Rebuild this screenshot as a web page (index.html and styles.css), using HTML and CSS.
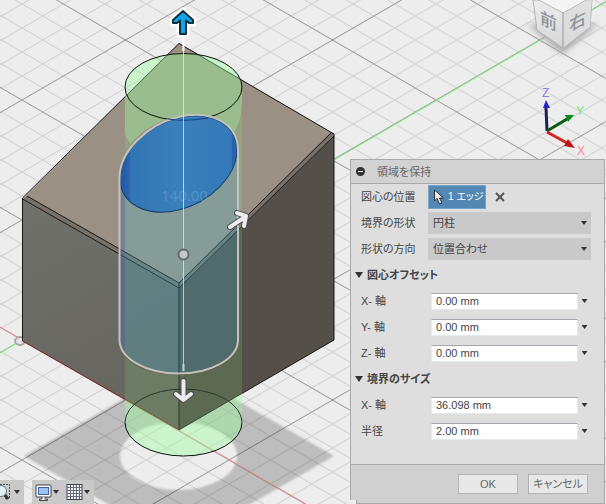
FILE: index.html
```html
<!DOCTYPE html>
<html lang="ja">
<head>
<meta charset="utf-8">
<title>領域を保持</title>
<link rel="stylesheet" href="styles.css">
</head>
<body>
<div class="viewport">

  <svg class="scene" aria-hidden="true">
    <defs>
      <pattern id="minor" x="22" y="340" width="41.4" height="24" patternUnits="userSpaceOnUse">
        <path d="M0 0L41.4 24M0 24L41.4 0" stroke="#000" stroke-opacity=".13" fill="none"/>
      </pattern>
      <pattern id="major" x="22" y="340" width="207" height="120" patternUnits="userSpaceOnUse">
        <path d="M0 0L207 120M0 120L207 0" stroke="#000" stroke-opacity=".26" fill="none"/>
      </pattern>
      <linearGradient id="bore">
        <stop offset="0" stop-color="#2457a6"/>
        <stop offset=".08" stop-color="#2a63ae"/>
        <stop offset=".09" stop-color="#3275b5"/>
        <stop offset=".5" stop-color="#3a80bb"/>
        <stop offset=".95" stop-color="#3579b8"/>
        <stop offset=".96" stop-color="#2b62ad"/>
      </linearGradient>
      <linearGradient id="left-face" x2=".4" y2="1">
        <stop offset="0" stop-color="#71716c"/>
        <stop offset="1" stop-color="#666560"/>
      </linearGradient>
      <filter id="soft"><feGaussianBlur stdDeviation="1"/></filter>
      <clipPath id="body-clip">
        <path d="M22.5 199L179 43L334 134V340L179 430L22.5 341Z"/>
      </clipPath>
      <clipPath id="below-clip">
        <path d="M22.5 341L179 430L334 340V504H22.5Z"/>
      </clipPath>
    </defs>

    <rect width="100%" height="100%" fill="#ededed"/>
    <!-- ground shadow with the hole left in it -->
    <path filter="url(#soft)" fill="#bdbdbd" fill-rule="evenodd" d="M24 456L179 367L334 456L179 545ZM120 456a58.5 34 0 0 0 117 0a58.5 34 0 0 0-117 0Z"/>
    <rect width="100%" height="100%" fill="url(#minor)"/>
    <rect width="100%" height="100%" fill="url(#major)"/>
    <path d="M0 327L306 504" stroke="#f28a8a"/>
    <path d="M0 353L22 340M334 160L606 2" stroke="#7cf07c"/>
    <ellipse cx="20" cy="341" rx="5" ry="4" fill="#e4e4e4" stroke="#a5a5a5" stroke-width="2"/>

    <!-- box -->
    <path d="M22.5 199L179 43L334 134L179 283Z" fill="#9a9184"/>
    <path d="M22.5 199L179 288V430L22.5 341Z" fill="url(#left-face)"/>
    <path d="M179 288L334 136V340L179 430Z" fill="#544f49"/>
    <path d="M22.5 199L27 196L179 283L332 132L334 136L179 288Z" fill="#777167"/>
    <g fill="none" stroke="#151515">
      <path d="M22.5 341V198L179 43.5L334 134V340L179 430"/>
      <path d="M22.5 199L179 288L334 136M27 196L179 283L332 132M179 283V430"/>
    </g>
    <path d="M22.5 341L179 430" stroke="#7c1c18"/>

    <!-- bounding cylinder -->
    <path d="M125 87a58.5 33.5 0 0 1 117 0V104Q241 122 234 132Q210 108 178 117Q148 122 131 144Q125 138 125 132Z" fill="#9aff9a" fill-opacity=".4"/>
    <path d="M125 132Q125 138 131 144L125 156ZM234 132Q241 122 242 104V422a58.5 33.5 0 0 1-117 0V357Q141 375 179 375Q234 372 238 341V150Z" fill="#82d878" fill-opacity=".2" clip-path="url(#body-clip)"/>
    <path d="M125 380V422a58.5 33.5 0 0 0 117 0V380Z" fill="#9aff9a" fill-opacity=".4" clip-path="url(#below-clip)"/>
    <ellipse cx="183.5" cy="87" rx="58.5" ry="33.5" fill="none" stroke="#0a140a"/>
    <path d="M125 422.5a58.5 33.5 0 0 1 117 0" fill="none" stroke="#2c3a2a"/>
    <path d="M125 422.5a58.5 33.5 0 0 0 117 0" fill="none" stroke="#0a140a"/>

    <!-- retained region -->
    <path d="M119.5 178C119.5 152 146 125 178.5 117C211 109 238 124 238 150V341A59.3 34 0 0 1 119.5 341Z" fill="#46c1d8" fill-opacity=".25"/>
    <path d="M120 180H125V355Q120 348 120 341Z" fill="#5a3f90" fill-opacity=".3"/>
    <ellipse rx="58.5" ry="46" transform="matrix(1 -.24 0 1 178.5 164)" fill="url(#bore)" stroke="#123d70"/>
    <path d="M119.5 178C119.5 152 146 125 178.5 117C211 109 238 124 238 150V341A59.3 34 0 0 1 119.5 341Z" fill="none" stroke="#c4c4ba" stroke-width="2"/>
    <path d="M168 119Q184 122 208 118" fill="none" stroke="#1b3f80"/>
    <text x="161" y="201" class="dimension">140.00</text>

    <!-- manipulators -->
    <path d="M183.5 39V368" stroke="#e2f2ea" stroke-opacity=".75"/>
    <path d="M183.5 39V51" stroke="#fff" stroke-width="2"/>
    <path d="M183.5 364V371" stroke="#b8dbe4" stroke-width="2"/>
    <circle cx="183.5" cy="254.5" r="5" fill="#c2cac8" stroke="#626a68" stroke-width="2"/>
    <path d="M183 11L193 20V23H189L186 20.5V34H180V20.5L177 23H173V20Z" fill="#fff" stroke="#fff" stroke-width="7" stroke-linejoin="round"/>
    <path d="M183 11L193 20V23H189L186 20.5V34H180V20.5L177 23H173V20Z" fill="#0ea5e9" stroke="#12303c" stroke-width="2" stroke-linejoin="round"/>
    <g fill="none" stroke-linecap="round" stroke-linejoin="round">
      <path d="M183.5 381V399M176 394L183.5 400L191 394" stroke="#4c4c4c" stroke-width="6"/>
      <path d="M183.5 381V399M176 394L183.5 400L191 394" stroke="#ececee" stroke-width="4"/>
      <path d="M230 227L245 217M237 213L246 216L244 226" stroke="#4c4c4c" stroke-width="6"/>
      <path d="M230 227L245 217M237 213L246 216L244 226" stroke="#ececee" stroke-width="4"/>
    </g>
  </svg>

  <svg class="compass" viewBox="0 0 86 160" aria-hidden="true">
    <defs>
      <linearGradient id="cube-left" x2="0" y2="1">
        <stop offset="0" stop-color="#ececec"/>
        <stop offset="1" stop-color="#d6d6d6"/>
      </linearGradient>
      <filter id="blur"><feGaussianBlur stdDeviation="3"/></filter>
    </defs>
    <path d="M8 24L42 54L78 24Z" fill="#aaa" filter="url(#blur)"/>
    <path d="M13 0H72L70 27L43 48L17 30Z" fill="url(#cube-left)" stroke="#b4b4b4"/>
    <path d="M43 13L72 -5L70 27L43 48Z" fill="#dcdcdc" fill-opacity=".7"/>
    <path d="M13 -3L43 13L72 -3" fill="#f4f4f4" stroke="#b8b8b8"/>
    <path d="M43 13V47" stroke="#999"/>
    <text class="cube-label" transform="translate(20 23) skewY(26)">前</text>
    <text class="cube-label" transform="translate(49 32) skewY(-28)">右</text>
    <g stroke-width="3">
      <path d="M27 131L26 108" stroke="#1c1c60"/>
      <path d="M23 108L26 100L30 108Z" fill="#2424c8" stroke="none"/>
      <path d="M27 131L47 119" stroke="#0c5a10"/>
      <path d="M45 115L54 115L48 122Z" fill="#0a8a12" stroke="none"/>
      <path d="M27 132L47 143" stroke="#d42424"/>
      <path d="M48 139L55 148L44 146Z" fill="#c01414" stroke="none"/>
    </g>
    <text class="axis" x="22" y="97" fill="#8080f4">Z</text>
    <text class="axis" x="56" y="115" fill="#70e870">Y</text>
    <text class="axis" x="57" y="155" fill="#f48888">X</text>
  </svg>

  <div class="toolbar">
    <div class="tool-group">
      <button class="tool" type="button" aria-label="ズーム">
        <svg width="10" height="18" viewBox="0 0 10 18">
          <path d="M0 1.5H9.5V15.5H5" fill="none" stroke="#555" stroke-dasharray="2 1"/>
          <circle cx="1" cy="8" r="5.5" fill="#def2f5" stroke="#68777a"/>
          <path d="M5 12L8 16" stroke="#333" stroke-width="3"/>
        </svg>
        <span class="arrow"></span>
      </button>
    </div>
    <div class="tool-group">
      <button class="tool" type="button" aria-label="表示設定">
        <svg width="17" height="18" viewBox="0 0 17 18">
          <rect x="1" y="2" width="15" height="12" rx="1" fill="#fff" stroke="#3d3d48"/>
          <rect x="3.5" y="4.5" width="10" height="7" fill="#9cc3ee" stroke="#3b64a0"/>
          <path d="M7 14V16H4.5V17.5H12.5V16H10V14" fill="#fff" stroke="#444"/>
        </svg>
        <span class="arrow"></span>
      </button>
      <button class="tool" type="button" aria-label="グリッド">
        <svg width="17" height="18" viewBox="0 0 17 18">
          <rect x="1" y="1.5" width="15" height="15" fill="#f2f4f8" stroke="#444"/>
          <path d="M4.5 2V16M7.5 2V16M10.5 2V16M13.5 2V16M1 4.5H16M1 7.5H16M1 10.5H16M1 13.5H16" stroke="#656a78"/>
        </svg>
        <span class="arrow"></span>
      </button>
    </div>
  </div>

  <form class="dialog">
    <div class="dialog-header">
      <button class="collapse" type="button" aria-label="折りたたむ"></button>
      <h1>領域を保持</h1>
    </div>

    <div class="dialog-body">
      <div class="row">
        <label for="centroid">図心の位置</label>
        <button class="pick" id="centroid" type="button">
          <svg width="12" height="16" viewBox="0 0 12 16" aria-hidden="true">
            <path d="M1.5 1V12L4 9.5L6.5 15L9 14L6.5 9H10.5Z" fill="#e8eaec" stroke="#333"/>
          </svg>
          1 エッジ
        </button>
        <button class="clear" type="button" aria-label="クリア">
          <svg width="10" height="10" viewBox="0 0 10 10"><path d="M1 1L9 9M9 1L1 9" stroke="#555" stroke-width="2"/></svg>
        </button>
      </div>
      <div class="row">
        <label for="shape">境界の形状</label>
        <span class="select">
          <select id="shape"><option>円柱</option></select>
          <span class="arrow"></span>
        </span>
      </div>
      <div class="row">
        <label for="direction">形状の方向</label>
        <span class="select">
          <select id="direction"><option>位置合わせ</option></select>
          <span class="arrow"></span>
        </span>
      </div>

      <h2>図心オフセット</h2>
      <div class="row">
        <label for="offset-x">X- 軸</label>
        <input id="offset-x" type="text" value="0.00 mm">
        <button class="more" type="button" aria-label="X- 軸"><span class="arrow"></span></button>
      </div>
      <div class="row">
        <label for="offset-y">Y- 軸</label>
        <input id="offset-y" type="text" value="0.00 mm">
        <button class="more" type="button" aria-label="Y- 軸"><span class="arrow"></span></button>
      </div>
      <div class="row">
        <label for="offset-z">Z- 軸</label>
        <input id="offset-z" type="text" value="0.00 mm">
        <button class="more" type="button" aria-label="Z- 軸"><span class="arrow"></span></button>
      </div>

      <h2>境界のサイズ</h2>
      <div class="row">
        <label for="size-x">X- 軸</label>
        <input id="size-x" type="text" value="36.098 mm">
        <button class="more" type="button" aria-label="X- 軸"><span class="arrow"></span></button>
      </div>
      <div class="row">
        <label for="radius">半径</label>
        <input id="radius" type="text" value="2.00 mm">
        <button class="more" type="button" aria-label="半径"><span class="arrow"></span></button>
      </div>
    </div>

    <div class="dialog-footer">
      <button class="btn" type="button">OK</button>
      <button class="btn" type="button">キャンセル</button>
    </div>
  </form>

</div>
</body>
</html>
```
FILE: styles.css
```css
* {
  box-sizing: border-box;
}

body {
  margin: 0;
  font-family: "Liberation Sans", "Noto Sans CJK JP", sans-serif;
  font-size: 11px;
  line-height: 16px;
  color: #444;
  font-feature-settings: "palt";
}

button, input, select {
  margin: 0;
  padding: 0;
  border: 0;
  font: inherit;
  font-feature-settings: inherit;
  color: inherit;
  background: none;
}

.viewport {
  position: relative;
  height: 100vh;
  overflow: hidden;
  background: #ededed;
}

.scene {
  position: absolute;
  width: 100%;
  height: 100%;
}

.dimension {
  font-family: "Noto Sans", sans-serif;
  font-size: 15px;
  fill: #7fb4e0;
  fill-opacity: .4;
}

.compass {
  position: absolute;
  top: 0;
  right: 0;
  width: 86px;
}

.cube-label {
  font-family: "Noto Sans CJK JP", sans-serif;
  font-size: 17px;
  font-weight: 500;
  fill: #8f939a;
}

.axis {
  font-size: 12px;
}

.arrow {
  width: 6px;
  height: 4px;
  background: #333;
  clip-path: polygon(0 0, 100% 0, 50% 100%);
}

/* navigation bar */
.toolbar {
  position: absolute;
  left: 0;
  bottom: 0;
  display: flex;
  gap: 8px;
}

.tool-group {
  display: flex;
  gap: 7px;
  height: 24px;
  padding-right: 4px;
  background: #c9c9c9;
}

.tool-group + .tool-group {
  padding-left: 3px;
}

.tool {
  display: flex;
  align-items: center;
  gap: 4px;
}

.tool-group + .tool-group .tool {
  gap: 1px;
}

/* dialog */
.dialog {
  position: absolute;
  top: 159px;
  right: 1px;
  width: 255px;
  border: 1px solid #a9a9a9;
  background: #dedede;
}

/* notch in the lower left corner */
.dialog::after {
  content: "";
  position: absolute;
  left: -1px;
  bottom: -1px;
  width: 6px;
  height: 4px;
  border-right: 1px solid #a9a9a9;
  background: #ededed;
}

.dialog-header {
  display: flex;
  align-items: center;
  gap: 12px;
  height: 24px;
  padding-left: 5px;
  border-bottom: 1px solid #a9a9a9;
  background: #d2d2d2;
}

.dialog-header h1 {
  margin: 0;
  font-size: 11px;
  font-weight: normal;
  color: #666;
}

.collapse {
  width: 9px;
  height: 9px;
  border-radius: 50%;
  background: linear-gradient(#eee, #eee) center / 5px 1px no-repeat #333;
}

.dialog-body {
  padding: 0 13px 20px 4px;
}

.row {
  display: flex;
  align-items: center;
  height: 26px;
  padding-left: 6px;
}

.row label {
  width: 67px;
}

.pick {
  display: flex;
  align-items: center;
  gap: 3px;
  width: 58px;
  height: 24px;
  padding-left: 4px;
  border: 1px solid #78a3cb;
  background: #5488b4;
  font-size: 10px;
  color: #fff;
  white-space: nowrap;
}

.pick svg {
  flex: none;
}

.clear {
  display: flex;
  margin-left: 9px;
}

.select {
  position: relative;
  flex: 1;
}

.select select {
  display: block;
  appearance: none;
  width: 100%;
  height: 22px;
  padding-left: 5px;
  background: #c9c9c9;
}

.select .arrow {
  position: absolute;
  top: 9px;
  right: 4px;
  pointer-events: none;
}

.dialog-body h2 {
  display: flex;
  align-items: center;
  gap: 4px;
  height: 26px;
  margin: 0;
  font-size: 11px;
  font-weight: bold;
}

.dialog-body h2::before {
  content: "";
  width: 8px;
  height: 6px;
  background: #333;
  clip-path: polygon(0 0, 100% 0, 50% 100%);
}

.row input {
  flex: 1;
  min-width: 0;
  height: 17px;
  margin-left: 3px;
  padding-left: 4px;
  border: 1px solid #e3e9f0;
  border-top-color: #a5a7af;
  background: #fff;
}

.more {
  display: flex;
  justify-content: center;
  width: 13px;
}

.dialog-footer {
  display: flex;
  align-items: center;
  justify-content: flex-end;
  gap: 10px;
  height: 39px;
  padding-right: 16px;
  border-top: 1px solid #a9a9a9;
  background: #d0d0d0;
}

.btn {
  width: 60px;
  height: 20px;
  border: 1px solid #b4b4b4;
  background: #e8e8e8;
  color: #666;
}
```
